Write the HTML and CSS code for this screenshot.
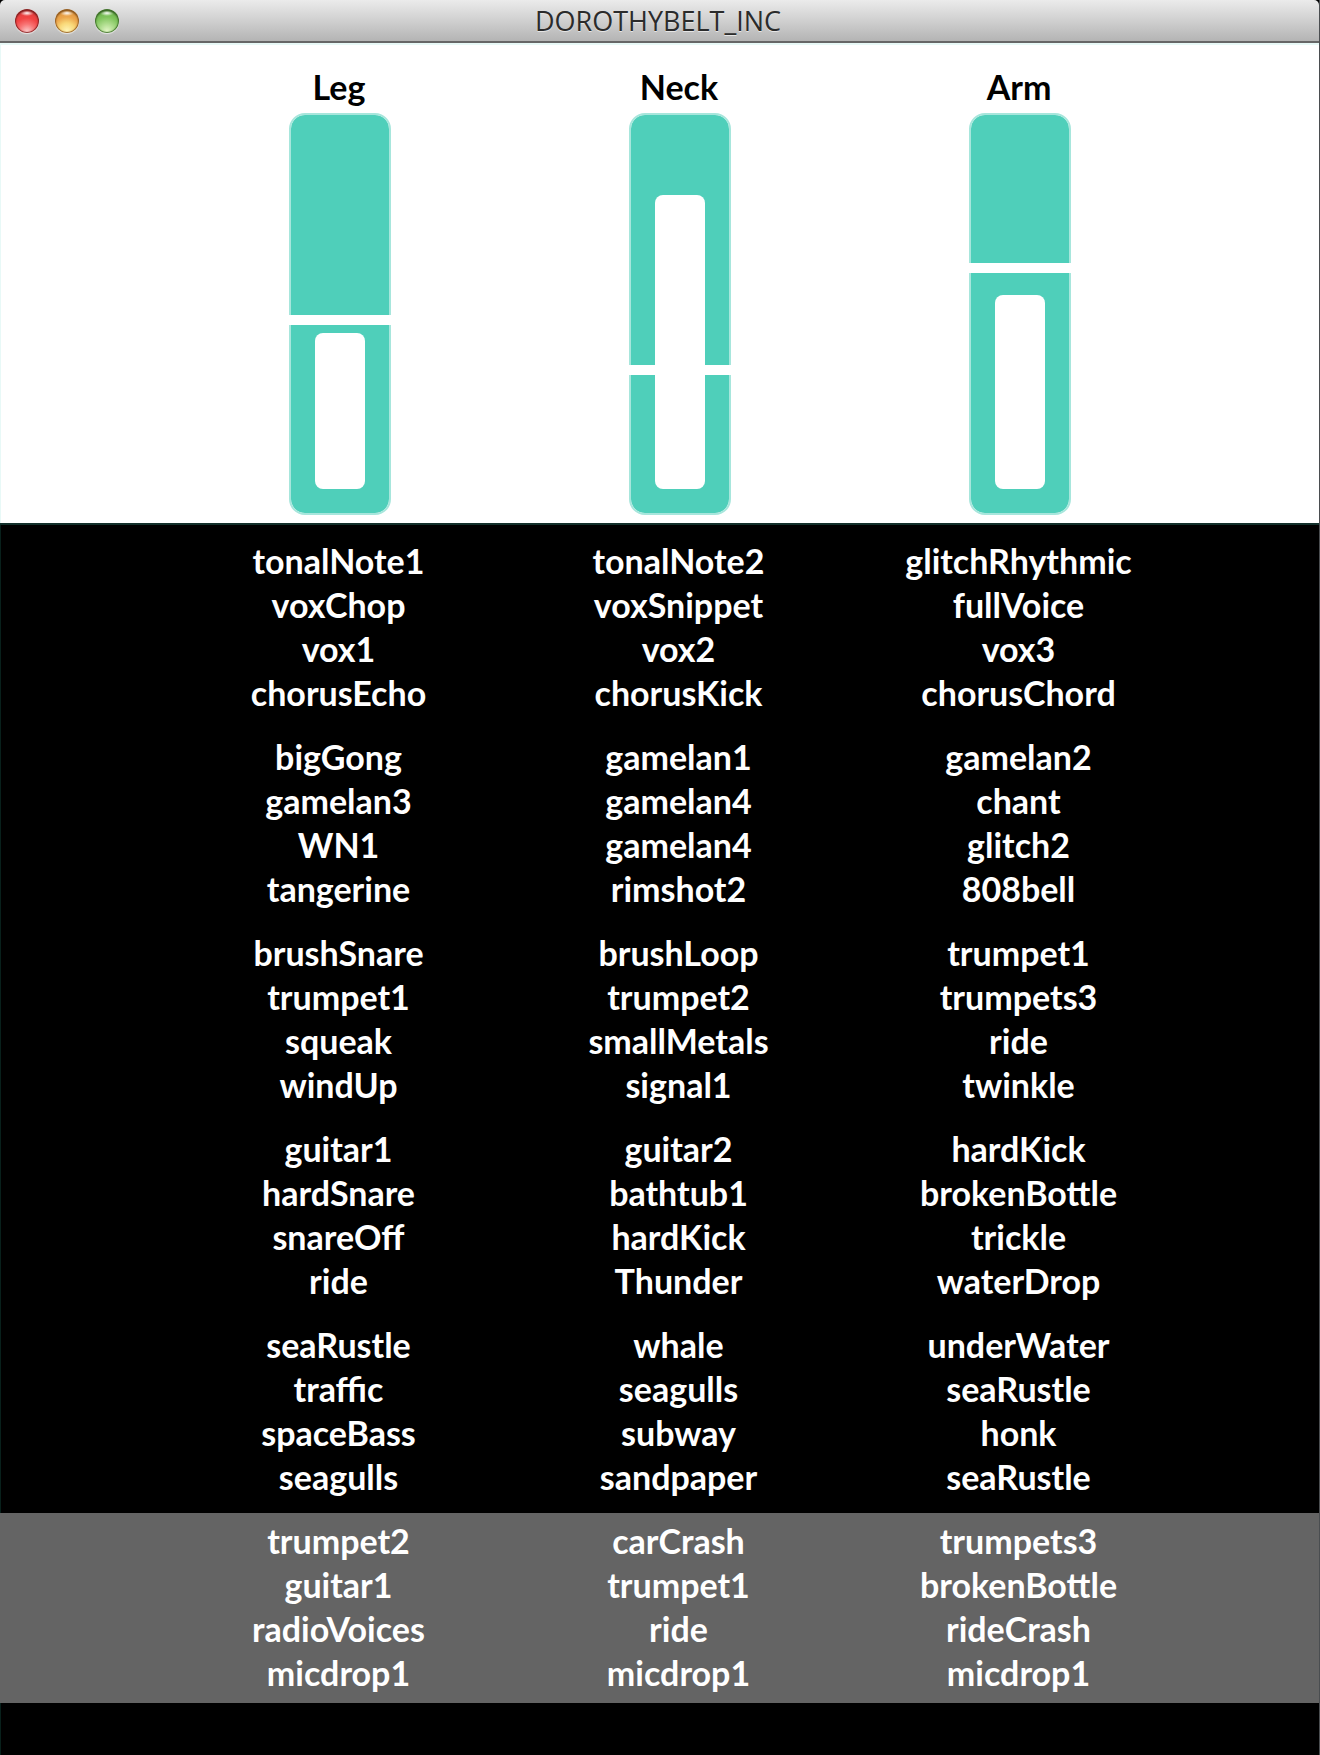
FILE: index.html
```html
<!DOCTYPE html>
<html lang="en">
<head>
<meta charset="utf-8">
<title>DOROTHYBELT_INC</title>
<link rel="stylesheet" href="styles.css">
</head>
<body>
<div class="window">
<header class="titlebar">
<div class="lights">
<button class="light light-close" aria-label="Close"></button>
<button class="light light-minimize" aria-label="Minimize"></button>
<button class="light light-zoom" aria-label="Zoom"></button>
</div>
<h1 class="title">DOROTHYBELT_INC</h1>
</header>
<main>
<section class="sensors columns">
<div class="sensor-row">
<div class="sensor"><h2 class="label">Leg</h2><div class="track" role="meter" aria-label="Leg" aria-valuenow="156" aria-valuemax="350"><div class="fill" style="height:156px"></div><div class="threshold" style="bottom:188px"></div></div></div>
<div class="sensor"><h2 class="label">Neck</h2><div class="track" role="meter" aria-label="Neck" aria-valuenow="294" aria-valuemax="350"><div class="fill" style="height:294px"></div><div class="threshold" style="bottom:138px"></div></div></div>
<div class="sensor"><h2 class="label">Arm</h2><div class="track" role="meter" aria-label="Arm" aria-valuenow="194" aria-valuemax="350"><div class="fill" style="height:194px"></div><div class="threshold" style="bottom:240px"></div></div></div>
</div>
</section>
<section class="banks">
<div class="bank columns"><table class="sounds">
<tr><td>tonalNote1</td><td>tonalNote2</td><td>glitchRhythmic</td></tr>
<tr><td>voxChop</td><td>voxSnippet</td><td>fullVoice</td></tr>
<tr><td>vox1</td><td>vox2</td><td>vox3</td></tr>
<tr><td>chorusEcho</td><td>chorusKick</td><td>chorusChord</td></tr>
</table></div>
<div class="bank columns"><table class="sounds">
<tr><td>bigGong</td><td>gamelan1</td><td>gamelan2</td></tr>
<tr><td>gamelan3</td><td>gamelan4</td><td>chant</td></tr>
<tr><td>WN1</td><td>gamelan4</td><td>glitch2</td></tr>
<tr><td>tangerine</td><td>rimshot2</td><td>808bell</td></tr>
</table></div>
<div class="bank columns"><table class="sounds">
<tr><td>brushSnare</td><td>brushLoop</td><td>trumpet1</td></tr>
<tr><td>trumpet1</td><td>trumpet2</td><td>trumpets3</td></tr>
<tr><td>squeak</td><td>smallMetals</td><td>ride</td></tr>
<tr><td>windUp</td><td>signal1</td><td>twinkle</td></tr>
</table></div>
<div class="bank columns"><table class="sounds">
<tr><td>guitar1</td><td>guitar2</td><td>hardKick</td></tr>
<tr><td>hardSnare</td><td>bathtub1</td><td>brokenBottle</td></tr>
<tr><td>snareOff</td><td>hardKick</td><td>trickle</td></tr>
<tr><td>ride</td><td>Thunder</td><td>waterDrop</td></tr>
</table></div>
<div class="bank columns"><table class="sounds">
<tr><td>seaRustle</td><td>whale</td><td>underWater</td></tr>
<tr><td>traffic</td><td>seagulls</td><td>seaRustle</td></tr>
<tr><td>spaceBass</td><td>subway</td><td>honk</td></tr>
<tr><td>seagulls</td><td>sandpaper</td><td>seaRustle</td></tr>
</table></div>
<div class="bank bank-active columns"><table class="sounds">
<tr><td>trumpet2</td><td>carCrash</td><td>trumpets3</td></tr>
<tr><td>guitar1</td><td>trumpet1</td><td>brokenBottle</td></tr>
<tr><td>radioVoices</td><td>ride</td><td>rideCrash</td></tr>
<tr><td>micdrop1</td><td>micdrop1</td><td>micdrop1</td></tr>
</table></div>
</section>
</main>
</div>
</body>
</html>
```
FILE: styles.css
```css
* { box-sizing: border-box; }
body { margin: 0; background: #000; font-family: Lato, "Open Sans", sans-serif; }
.window { min-height: 100vh; display: flex; flex-direction: column; border-right: 1px solid #4a4d50; }
main { flex: 1; display: flex; flex-direction: column; }

.titlebar {
  display: grid;
  grid-template-columns: 1fr auto 1fr;
  align-items: center;
  height: 43px;
  padding: 0 18px 0 15px;
  border-bottom: 2px solid #666;
  border-radius: 5px 5px 0 0;
  background: linear-gradient(#ebebeb, #d0d0d0 50%, #b4b4b4);
}
.lights { display: flex; gap: 16px; }
.light {
  width: 24px;
  height: 24px;
  padding: 0;
  border: 0;
  border-radius: 50%;
}
.light-close {
  background: radial-gradient(ellipse 7px 3px at 12px 4px, #fff, transparent), radial-gradient(circle at 12px 23px, #fbd0d0, #f87474 8px, #f14444 14px, #d83a3a);
  box-shadow: inset 0 0 1px 1px #8a2424, inset 0 2px 2px #7a1a1a, 0 1px 1px #e8e8e8;
}
.light-minimize {
  background: radial-gradient(ellipse 7px 3px at 12px 4px, #fff, transparent), radial-gradient(circle at 12px 22px, #fff6b8, #f9d878 8px, #eca64c 14px, #d98b34);
  box-shadow: inset 0 0 1px 1px #996226, inset 0 2px 2px #7e4c14, 0 1px 1px #e8e8e8;
}
.light-zoom {
  background: radial-gradient(ellipse 7px 3px at 12px 4px, #fff, transparent), radial-gradient(circle at 12px 22px, #e2f6c6, #a9da88 8px, #7fc45c 14px, #5ea53f);
  box-shadow: inset 0 0 1px 1px #44752e, inset 0 2px 2px #2c561b, 0 1px 1px #e8e8e8;
}
.title {
  margin: 0;
  font: 500 27px/40px "Open Sans", sans-serif;
  color: #2b2b2b;
  text-shadow: 0 1px 0 #e6e6e6;
}

.columns { display: grid; grid-template-columns: 170fr 1020fr 129fr; }
.columns > * { grid-column: 2; }

.sensors {
  padding: 20px 0 8px;
  background: #fff;
  border-top: 2px solid #e8f9f7;
  box-shadow: inset 1px 0 #e8f9f7;
}
.sensor-row { display: grid; grid-template-columns: repeat(3, 1fr); }
.sensor { display: flex; flex-direction: column; align-items: center; gap: 4px; }
.label { margin: 0; padding-right: 2px; font-size: 34px; font-weight: 700; line-height: 44px; color: #000; }
.track {
  position: relative;
  width: 102px;
  height: 402px;
  border: 2px solid #a7e6dc;
  border-radius: 16px;
  background: #4fcfba;
  background-clip: padding-box;
}
.fill { position: absolute; left: 24px; right: 24px; bottom: 24px; border-radius: 8px; background: #fff; }
.threshold { position: absolute; left: -2px; right: -2px; height: 10px; background: #fff; }

.banks {
  flex: 1;
  display: flex;
  flex-direction: column;
  gap: 6px;
  padding-top: 8px;
  border-top: 2px solid #12302b;
  box-shadow: inset 1px 0 #08201b;
}
.bank { padding: 6px 0 8px; }
.bank-active { background: #646464; }
.sounds { width: 100%; table-layout: fixed; border-collapse: collapse; }
.sounds td {
  padding: 0 3px 0 0;
  font-size: 34px;
  font-weight: 700;
  line-height: 44px;
  text-align: center;
  color: #fff;
}
```
